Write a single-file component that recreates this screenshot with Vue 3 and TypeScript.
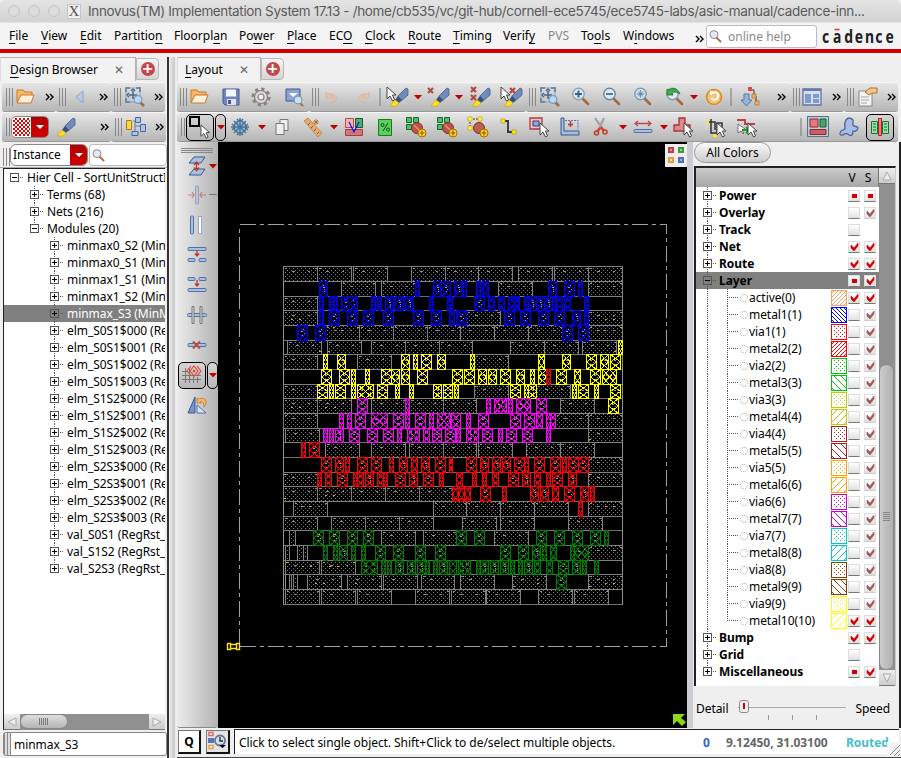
<script setup lang="ts">
type Placed = { icon: string; gap: number; size: number }

const menus: { text: string; key: number; left: number; off?: boolean }[] = [
  { text: 'File', key: 0, left: 9 },
  { text: 'View', key: 0, left: 41 },
  { text: 'Edit', key: 0, left: 80 },
  { text: 'Partition', key: 8, left: 114 },
  { text: 'Floorplan', key: 7, left: 174 },
  { text: 'Power', key: 2, left: 239 },
  { text: 'Place', key: 0, left: 287 },
  { text: 'ECO', key: 2, left: 329 },
  { text: 'Clock', key: 0, left: 365 },
  { text: 'Route', key: 0, left: 408 },
  { text: 'Timing', key: 0, left: 453 },
  { text: 'Verify', key: 5, left: 503 },
  { text: 'PVS', key: -1, left: 548, off: true },
  { text: 'Tools', key: 2, left: 581 },
  { text: 'Windows', key: 1, left: 623 },
]

const glass = (c: string) =>
  `<path d="M12.500 12.500l5.500 5.500" stroke="#a8683a" stroke-width="2.600" stroke-linecap="round"/><circle cx="8.500" cy="8" r="5.700" fill="#dfeaf4" stroke="${c}" stroke-width="1.400"/>`
const pen = `<path d="M12 10L20 2l2 1v6l-7 6z" fill="#6f8cc0" stroke="#4c5c78" stroke-width=".8"/><path d="M12 10l4 4-3 3-4-3z" fill="#39507c"/><path d="M9 14l4 3-3 3H4z" fill="#ffe020" stroke="#d8a800" stroke-width=".7"/>`
const cursor = `<path d="M1 1v12l3-3 2.500 5 2-1-2-5h3.500z" fill="#fff" stroke="#444" stroke-width="1"/>`
const xMark = (x: number, y: number) =>
  `<path d="M${x} ${y}l5 5m0-5l-5 5" stroke="#b04844" stroke-width="2.200"/>`
const greenAdd = `<path d="M1.500 1.500h5v5h-5zM8.500 1.500h5v5h-5zM1.500 8.500h5v5h-5z" fill="#4fc070" stroke="#106828"/><circle cx="12" cy="12" r="5.500" fill="#c05048" stroke="#803028"/><path d="M9 9l6 6" stroke="#d89088" stroke-width="1.500"/>`
const plusBadge = `<circle cx="17" cy="17" r="4" fill="#ffd820" stroke="#a07000"/><path d="M17 14.500v5M14.500 17h5" stroke="#a05010" stroke-width="1.200"/>`
const bar = (x: number, y: number, w: number, h: number) =>
  `<rect x="${x}" y="${y}" width="${w}" height="${h}" rx="1" fill="#a9c0e6" stroke="#5070a8"/>`
const fit = `<path d="M2 6V2h4M12 2h4v4M2 12v4h4M7 5l2-2 2 2M5 7L3 9l2 2M9 5v8M5 9h8" fill="none" stroke="#45688c" stroke-width="1.500"/><path d="M2 2h14v14H2z" fill="none" stroke="#7897b4" stroke-width=".8"/><path d="M16 16l4 4" stroke="#a8683a" stroke-width="2.500"/><circle cx="14" cy="13.500" r="4" fill="#b5d5f0" stroke="#6a96bb"/>`

const icons: Record<string, string> = {
  folder: `<path d="M3 16V4h6l2 2h7v4" fill="#f7b765" stroke="#c8782c"/><path d="M3 17L7 9h13l-3 8z" fill="#fdf0dc" stroke="#c8782c"/>`,
  save: `<path d="M3 3h16v16H5l-2-2z" fill="#6e86bd" stroke="#435b94"/><path d="M6 3.500h10v7H6z" fill="#f4f7fd"/><path d="M7 13h9v6H7z" fill="#dfe3ea"/><path d="M8 14h3v4H8z" fill="#435b94"/>`,
  gear: `<circle cx="11" cy="11" r="8" fill="none" stroke="#8c8080" stroke-width="3" stroke-dasharray="3.200 3.083"/><circle cx="11" cy="11" r="6.500" fill="#ddd8d8" stroke="#887c7c" stroke-width="1.200"/><circle cx="11" cy="11" r="3" fill="#eee" stroke="#887c7c" stroke-width="1.200"/>`,
  find: `<path d="M3 3h14v12H3z" fill="#8ca4cf" stroke="#3f588b"/><path d="M6 7l4 4 5-4z" fill="#fff"/><path d="M17 17l3 3" stroke="#b06b38" stroke-width="2"/><circle cx="15" cy="14" r="4" fill="#cde1f1" stroke="#6a96bb"/>`,
  undo: `<path d="M5 6v6h6l-2-2c5-1 5 3 1 7 8-2 7-10-3-9z" fill="#e8c4aa" stroke="#d8b098" stroke-width=".8"/>`,
  redo: `<path d="M17 6v6h-6l2-2c-5-1-5 3-1 7-8-2-7-10 3-9z" fill="#e8c4aa" stroke="#d8b098" stroke-width=".8"/>`,
  penCursor: cursor + pen,
  penX: xMark(1, 2) + pen,
  penXX: xMark(3, 1) + xMark(3, 9) + pen,
  penCX: cursor + pen + xMark(10, 2),
  pen,
  fit,
  zoomIn: glass('#8ba4b8') + '<path d="M8.500 4.500v7M5 8h7" stroke="#34628c" stroke-width="2"/>',
  zoomOut: glass('#6a8aa4') + '<path d="M5 8h7" stroke="#54789c" stroke-width="2"/>',
  zoomFit: glass('#7d9ab4') + '<path d="M8.500 4v8M4.500 8h8" stroke="#7fa0bc" stroke-width="1.500"/><path d="M6 5.500l5 5m0-5l-5 5" stroke="#5880a0"/>',
  zoomPrev: glass('#7d9ab4') + '<path d="M3 9V3l2 1c5-3 9-1 11 4-4-3-6-2-8-1l1 2z" fill="#3fae49" stroke="#18702a" stroke-width=".8"/>',
  refresh: `<circle cx="11" cy="11" r="7.500" fill="#f6c178" stroke="#e08a20" stroke-width="1.600"/><path d="M8 9V6l2 1c4-2 6 1 5 4-1 3-5 4-7 1" fill="none" stroke="#fff" stroke-width="2"/>`,
  hier: `<path d="M6 8h5v6h3l-5.500 6-5.500-6h3z" fill="#9ab5d6" stroke="#5276a5"/><path d="M12 4h4v4m2 2v6" fill="none" stroke="#333"/><path d="M10 1h4v4h-4z" fill="#e04848"/><path d="M14 8h4v4h-4zM17 15h4v4h-4z" fill="#efb060" stroke="#a87028" stroke-width=".7"/>`,
  window: `<path d="M2 3h18v16H2z" fill="#d7dfef" stroke="#5d739f" stroke-width="1.300"/><path d="M2 3h18v2H2z" fill="#607bb0"/><path d="M4 8h6v9H4zM12 8h6v4h-6zM12 13h6v4h-6z" fill="#7f9ad0"/>`,
  note: `<path d="M3 5h13v15H3z" fill="#f4f4f4" stroke="#8a8a8a"/><path d="M5 11h8M5 14h8M5 17h6" stroke="#a5a5a5"/><path d="M9 6l5-4h7v5h-5l-3 2z" fill="#f7c786" stroke="#a87030"/>`,
  flake: `<g fill="none" stroke="#47759c" stroke-width="1.500"><circle cx="11" cy="11" r="6" fill="#9abbd2"/><path d="M11 2v18M2 11h18M5 5l12 12M17 5L5 17M8 3l3 3 3-3M8 19l3-3 3 3M3 8l3 3-3 3M19 8l-3 3 3 3"/></g>`,
  copy: `<path d="M9 3.500h8v11H9z" fill="#eee" stroke="#777"/><path d="M5 7.500h8v11H5z" fill="#eee" stroke="#777"/>`,
  ruler: `<path d="M2 5l4-3 14 15-4 4z" fill="#e3ab74" stroke="#c88748"/><path d="M6 9l2-2m1 5l2-2m1 5l2-2m1 5l2-2" stroke="#8d5320"/><path d="M14 3v6M11 6h6M12 4l4 4m0-4l-4 4" stroke="#b85d18" stroke-width=".8"/>`,
  colors: `<path d="M2.500 2.500h8v9h-8z" fill="#f2b1b5" stroke="#b64b50"/><path d="M12.500 2.500h7v9h-7z" fill="#52aa71" stroke="#125f2c"/><path d="M2.500 13.500h17v6h-17z" fill="#d67578" stroke="#a93a40"/><path d="M6 6l5 10 5-10" fill="none" stroke="#1010ff" stroke-width="1.200"/>`,
  percent: `<path d="M4.500 3.500h13v16h-13z" fill="#5cd05c" stroke="#137b20"/><path d="M14 7l-5 8" stroke="#114e17"/><circle cx="8.500" cy="9" r="1.500" fill="none" stroke="#114e17"/><circle cx="14" cy="13.500" r="1.500" fill="none" stroke="#114e17"/>`,
  greenAdd: greenAdd + plusBadge,
  yellowAdd: `<path d="M3 3h11M3 3v10" stroke="#333" stroke-dasharray="2 1"/><circle cx="12" cy="12" r="5.500" fill="#b7614e" stroke="#803028"/><path d="M1 1h4v4H1zM11 1h4v4h-4zM1 10h4v4H1z" fill="#fff050" stroke="#c8a800" stroke-width=".7"/>` + plusBadge,
  wire: `<path d="M5 5h5v11h6" fill="none" stroke="#333" stroke-width="1.800"/><path d="M3 3h4v4H3zM14 14h4v4h-4z" fill="#ffe820" stroke="#b4a000" stroke-width=".7"/>`,
  rectCur: `<path d="M2 2h12v11H2z" fill="#efc2c2" stroke="#b23838" stroke-width="1.300"/><path d="M5 5h6v5H5z" fill="#93a8d8" stroke="#283e84"/><g transform="translate(11 6)">${cursor}</g>`,
  bracket: `<path d="M2 2h3v13h15v4H2z" fill="#a6bbdf" stroke="#3b588e"/><path d="M6 4.500h13v9" fill="none" stroke="#5677b1" stroke-dasharray="2 1"/><path d="M11.500 5v6M9 8.500h5" stroke="#b83838" stroke-width="1.500"/>`,
  cut: `<path d="M3 2l7 10M12 2L7 13" stroke="#9e9e9e" stroke-width="2"/><path d="M9 11l3 4M8 12l-3 4" stroke="#d9422c" stroke-width="2.500"/><circle cx="4.500" cy="17" r="2" fill="none" stroke="#c33a28" stroke-width="1.500"/><circle cx="13" cy="16" r="2" fill="none" stroke="#c33a28" stroke-width="1.500"/>`,
  spacing: `<path d="M3 7.500h16M6 5L3 7.500 6 10M16 5l3 2.500-3 2.500" fill="none" stroke="#bb4a4a" stroke-width="1.300"/>${bar(2, 13.5, 18, 3)}`,
  poly: `<path d="M7 2h6v7h5v6H2V9h5z" fill="#de898c" stroke="#af3036" stroke-width="1.300"/><g transform="translate(11 6)">${cursor}</g>`,
  wires: `<path d="M7 3v14h6V7h5v10M3 6h8v8" fill="none" stroke="#333" stroke-width="1.500"/><path d="M1 7l4-3v4zM9 18h4v3H9z" fill="#ffe820"/><g transform="translate(12 6)">${cursor}</g>`,
  path: `<path d="M2 4h8v4h10" fill="none" stroke="#c54045" stroke-width="2"/><path d="M3 8v9l3-2 2 3 1-1-2-3 3-1z" fill="#fff" stroke="#555" stroke-width=".8"/><path d="M7 14h6m-2-3l3 3-3 3" stroke="#1b9822" stroke-width="1.800" fill="none"/><g transform="translate(12 6)">${cursor}</g>`,
  boxes: `<path d="M.500.500h21v20H.500z" fill="#b2d1db" stroke="#527388"/><path d="M3 3h8v8H3z" fill="#e5777c" stroke="#99242b"/><path d="M13 3h6v8h-6z" fill="#49a766" stroke="#165d2e"/><path d="M3 13.500h16v5H3z" fill="#ca5e64" stroke="#99242b"/>`,
  blob: `<path d="M8 4q3-4 7 0c1 2-2 5 1 6q6 1 3 4-2 2-4 1 0 6-4 4-3-3-6 0-5 1-2-4 5-2 4-4-1-4 1-7z" fill="#a9bde0" stroke="#4a659e" stroke-width="1.300"/>`,
  green: `<path d="M2.500 5.500h6v12h-6zM13.500 5.500h6v12h-6z" fill="#9ce1a4" stroke="#15762b"/><path d="M4 8h3M4 11h3M4 14h3M15 8h3M15 11h3M15 14h3" stroke="#17692a"/><path d="M9.500 2.500h3v17h-3z" fill="#ee8686" stroke="#b11f25"/>`,
  select: `<path d="M2 2h9v9H2z" fill="none" stroke="#000" stroke-width="2"/><g transform="translate(12 9) scale(.95)">${cursor}</g>`,
  hierarchy: `<path d="M8 5h4M10 5v12M10 10h5" stroke="#697da0"/><path d="M1.500 4.500h5v9h-5z" fill="#ffd541" stroke="#a67c10"/><path d="M10.500 1.500h5v5h-5zM15.500 8.500h5v7h-5zM7 15.500h6v4H7z" fill="#b0c4ea" stroke="#4965a0"/>`,
  back: `<path d="M15 5v12l-7-6z" fill="#b8cee8" stroke="#829abd" stroke-width=".8"/>`,
  sheets: `<path d="M8 2h11l-4 6H3zM8 14h11l-4 6H3z" fill="#a9bee1" stroke="#3b588e"/><path d="M10.500 7v8M8 10l2.500-3 2.500 3M8 12.500l2.500 3 2.500-3" fill="none" stroke="#be342e" stroke-width="1.300"/>`,
  squeeze: `<g opacity=".5">${bar(9.5, 2, 3, 18)}<path d="M2 11h6m-2-3l2 3-2 3M20 11h-6m2-3l-2 3 2 3" fill="none" stroke="#be342e" stroke-width="1.200"/></g>`,
  columns: `${bar(4.5, 2, 3, 18)}<path d="M12.500 2.500h3v17h-3z" fill="#fff" stroke="#506c9f" stroke-dasharray="1 1"/>`,
  alignUp: `${bar(2, 3.5, 18, 3)}${bar(2, 14.5, 7, 3)}${bar(13, 14.5, 7, 3)}<path d="M11 7v5M9 9.500l2 2.500 2-2.500" fill="none" stroke="#be342e" stroke-width="1.300"/>`,
  alignDown: `${bar(2, 3.5, 7, 3)}${bar(13, 3.5, 7, 3)}${bar(2, 14.5, 18, 3)}<path d="M11 6v6M9 9.500l2 2.500 2-2.500" fill="none" stroke="#be342e" stroke-width="1.300"/>`,
  cross: `${bar(1.5, 9.5, 19, 3)}<path d="M6 2.500h2v17H6zM14 2.500h2v17h-2z" fill="#ddd" stroke="#777"/>`,
  cutBar: `${bar(2, 9.5, 18, 3)}<path d="M7 7.500l7 7m0-7l-7 7" stroke="#b84a43" stroke-width="2"/>`,
  grid: `<path d="M4.500 4v15M8.500 4v15M12.500 11v8M16.500 13v6M1 7.500h6M1 11.500h19M1 15.500h19" stroke="#777"/><path d="M10 2L6 7l4 5M16 2l4 5-4 5M13 2L9 7l4 5 4-5z" fill="none" stroke="#e14b40" stroke-width="1.200"/><circle cx="13" cy="7" r="1.500" fill="#e14b40"/>`,
  flip: `<path d="M9 3v16H2z" fill="#7793ca" stroke="#3b588e"/><path d="M11 11v8h9z" fill="#d8e4f9" stroke="#5270a9"/><path d="M11 9V4l2 1c7-3 9 4 5 8 0-5-2-6-4-5l1 1z" fill="#f8b765" stroke="#b97329" stroke-width=".8"/>`,
  tri: `<path d="M1 2h8L5 6.500z" fill="#c00000"/>`,
  sep: `<path d="M1 0v18" stroke="#777"/>`,
  more: `<path d="M1 2l3 3-3 3M5 2l3 3-3 3" fill="none" stroke="#000" stroke-width="1.400"/>`,
  grip: `<path d="M1.500 0v18M4.500 0v18M7.500 0v18" stroke="#888"/>`,
}

const dims: Record<string, [number, number]> = { tri: [10, 8], sep: [2, 18], more: [10, 10], grip: [8, 18] }
const dim = (n: string): [number, number] => dims[n] ?? [22, 22]

/* Turns icon centre positions into the gap before each icon. */
function place(start: number, items: [string, number][]): Placed[] {
  let at = start
  return items.map(([icon, c]) => {
    const size = dim(icon)[0]
    const gap = c - size / 2 - at
    at = c + size / 2
    return { icon, gap, size }
  })
}

const leftOne = [
  { w: 54, items: place(2, [['grip', 9], ['folder', 25], ['more', 50]]) },
  { w: 55, items: place(57, [['grip', 63], ['back', 80], ['more', 105]]) },
  { w: 54, items: place(112, [['grip', 118], ['fit', 136], ['more', 160]]) },
]
const rightOne = [
  { w: 132, items: place(177, [['grip', 183], ['folder', 199], ['save', 231], ['gear', 261], ['find', 294]]) },
  { w: 217, items: place(309, [['grip', 315], ['undo', 332], ['redo', 363], ['sep', 380], ['penCursor', 397], ['tri', 418], ['penX', 438], ['tri', 459], ['penXX', 479], ['penCX', 511]]) },
  { w: 264, items: place(526, [['grip', 532], ['fit', 550], ['zoomIn', 581], ['zoomOut', 612], ['zoomFit', 643], ['zoomPrev', 675], ['tri', 694], ['refresh', 714], ['sep', 731], ['hier', 749], ['more', 782]]) },
  { w: 54, items: place(790, [['grip', 796], ['window', 812], ['more', 837]]) },
  { w: 54, items: place(844, [['grip', 850], ['note', 867], ['more', 892]]) },
]
const rightTwo = place(228, [['flake', 240], ['tri', 262], ['copy', 282], ['ruler', 313], ['tri', 334], ['colors', 354], ['percent', 385], ['greenAdd', 416], ['greenAdd', 447], ['yellowAdd', 478], ['wire', 509], ['rectCur', 539], ['bracket', 570], ['cut', 603], ['tri', 623], ['spacing', 643], ['tri', 664], ['poly', 683], ['wires', 715], ['path', 746], ['sep', 801], ['boxes', 818], ['blob', 849]])
const side = ['sheets', 'squeeze', 'columns', 'alignUp', 'alignDown', 'cross', 'cutBar']

const modules = [
  'minmax0_S2 (Min', 'minmax0_S1 (Min', 'minmax1_S1 (Min', 'minmax1_S2 (Min', 'minmax_S3 (MinM',
  ...['S0S1', 'S1S2', 'S2S3'].flatMap((s) => [0, 1, 2, 3].map((n) => `elm_${s}$00${n} (Re`)),
  'val_S0S1 (RegRst_', 'val_S1S2 (RegRst_', 'val_S2S3 (RegRst_',
]
const tree = [
  { text: 'Hier Cell - SortUnitStructI', level: 0, open: true },
  { text: 'Terms (68)', level: 1, open: false },
  { text: 'Nets (216)', level: 1, open: false },
  { text: 'Modules (20)', level: 1, open: true },
  ...modules.map((text) => ({ text, level: 2, open: false })),
]

type Box = 'on' | 'dim' | 'off' | 'part' | 'none'
interface Layer { text: string; v: Box; s: Box; child?: boolean; color?: string; fill?: string }
const group = (text: string, v: Box, s: Box): Layer => ({ text, v, s })
const hues = ['#0000ff', '#ff0000', '#00c800', '#c8c800', '#a52020', '#ffa500', '#c800c8', '#00c8c8', '#8b4000', '#ffff00']
const layers: Layer[] = [
  group('Power', 'part', 'part'), group('Overlay', 'off', 'dim'), group('Track', 'off', 'none'),
  group('Net', 'on', 'on'), group('Route', 'on', 'on'), group('Layer', 'part', 'on'),
  { text: 'active(0)', v: 'on', s: 'on', child: true, color: '#f4a460', fill: 'up4' },
  ...hues.flatMap((_, i): Layer[] => {
    const n = i + 1
    const metal: Layer = { text: `metal${n}(${n})`, v: n === 10 ? 'on' : 'off', s: n === 10 ? 'on' : 'dim', child: true, color: hues[i], fill: (n % 2 ? 'down' : 'up') + (n < 3 ? 4 : 7) }
    const via: Layer = { text: `via${n}(${n})`, v: 'off', s: 'dim', child: true, color: hues[n], fill: 'dots' }
    return n < 10 ? [metal, via] : [metal]
  }),
  group('Bump', 'on', 'on'), group('Grid', 'off', 'none'), group('Miscellaneous', 'part', 'on'),
]
function swatch(fill: string): string {
  if (fill === 'dots') {
    let d = ''
    for (let y = 2; y < 14; y += 2) for (let x = y % 4 ? 3 : 5; x < 14; x += 4) d += `M${x} ${y + 0.5}h1`
    return d
  }
  const step = Number(fill.slice(-1))
  let d = ''
  for (let k = step; k < 31; k += step) {
    const a = Math.max(1, k - 15), b = Math.min(15, k)
    d += fill.startsWith('up') ? `M${a} ${k - a}L${b} ${k - b}` : `M${16 - a} ${k - a}L${16 - b} ${k - b}`
  }
  return d
}

/* Standard-cell rows: filler cells, then placed cells by colour; units are thirds of a pixel. */
const rowTops = [266, 281, 296, 310, 325, 340, 354, 369, 384, 398, 413, 428, 442, 457, 472, 486, 501, 516, 530, 545, 560, 574, 589, 604]
const rows: string[] = [
  'g 25-127 127-229 235-337 409-511 511-610 610-712 730-832 838-940 940-1042',
  'g 199-301 319-421 670-772 940-1042 b 132-158 421-434 475-499 499-525 537-562 562-575 604-617 622-641 820-845 868-899 910-923',
  'g 25-127 b 132-146 163-175 175-188 199-247 289-302 307-320 331-356 361-386 391-415 463-476 517-532 598-629 640-659 670-689 700-719 719-732 748-761 761-785 785-809 809-833 833-845 845-863 868-887 928-941',
  'g 25-127 575-677 940-1042 b 132-146 163-194 217-248 265-296 325-356 415-446 469-500 523-537 543-575 688-719 736-767 790-821 838-868 892-916 928-941',
  'g 152-254 254-355 355-457 457-556 556-658 658-760 760-862 940-1042 b 67-98 121-152 862-893 910-941',
  'g 37-139 157-259 289-391 391-493 493-592 706-808 808-910 922-1024 y 1030-1042',
  'g 25-127 247-349 599-701 y 145-158 187-211 379-404 415-428 439-470 487-511 586-599 790-809 862-886 934-965 976-1001 1006-1037',
  'y 139-170 193-224 229-242 271-284 319-349 349-374 379-404 427-458 532-563 568-599 610-635 640-665 676-707 724-749 766-779 790-814 844-875 898-917 946-977 982-1025 r 814-827',
  'g 25-127 598-700 785-886 y 127-158 163-176 181-212 229-242 247-296 307-338 361-374 403-416 475-500 505-531 538-551 706-737 748-761 761-785 892-905 910-941 958-971 1006-1037',
  'g 25-127 127-229 289-391 403-505 505-604 856-958 m 247-278 391-404 634-647 658-695 700-713 724-767 784-815 y 1000-1031',
  'g 25-127 841-940 940-1042 m 193-206 217-230 241-272 289-338 355-386 391-404 421-452 463-476 487-525 529-557 574-587 610-641 706-737 748-779 784-803 814-827 827-840',
  'g 31-133 940-1042 m 145-158 163-176 182-206 223-254 277-308 325-356 367-380 397-434 445-462 473-500 511-541 545-557 573-611 622-653 670-683 694-725 742-773 814-827',
  'g 151-253 289-391 403-505 505-604 610-712 754-856 856-958 r 79-92 103-134',
  'g 940-1042 r 139-170 181-206 211-224 247-278 289-320 343-356 373-398 409-428 439-464 481-512 523-533 574-605 616-641 652-677 682-707 718-748 748-761 778-809 826-857 862-875 880-911 911-940',
  'g 25-127 940-1042 r 127-140 151-170 187-218 235-248 248-266 271-296 307-326 326-338 361-392 403-428 445-476 493-506 544-563 592-605 622-635 652-671 700-731 742-767 778-797 814-827 832-863 880-905',
  'g 25-127 127-229 229-331 331-433 433-532 r 532-551 551-569 569-587 616-647 682-695 766-791 796-821 832-851 868-899 916-941 946-959',
  'g 55-157 475-574 574-676 676-778 778-880 940-1042 r 910-923',
  'g 25-127 169-271 271-373 373-475 562-664 676-778 880-982',
  'g 43-61 319-421 445-544 658-760 n 115-146 163-194 217-248 265-296 544-575 598-629 784-815 838-869 892-923 946-977 988-1001',
  'g 31-43 67-85 85-97 941-1042 n 145-158 175-188 193-218 229-242 259-272 301-332 355-386 421-452 481-512 676-707 730-761 772-797 802-815 826-845 886-899 899-941',
  'g 31-133 139-241 n 259-307 319-332 337-350 361-386 397-422 427-452 452-464 475-488 493-518 523-545 550-587 604-615 616-641 646-671 676-701 706-719 730-743 748-773 778-797 814-833 850-881 892-917 922-935 958-971',
  'g 43-49 55-67 97-199 217-319 325-427 439-538 556-658 712-814 940-1042 n 844-875',
  'g 31-133 139-241 247-349 421-523 529-631 634-736 790-892 898-1000',
]
const cellColor: Record<string, string> = { g: '#808080', b: '#0000ff', y: '#ffff00', m: '#ff00ff', r: '#ff0000', n: '#008000' }
const cells = rows.flatMap((row, i) => {
  let kind = 'g'
  const out: { kind: string; x: number; y: number; w: number; h: number }[] = []
  for (const part of row.split(' ')) {
    if (part.length === 1) { kind = part; continue }
    const [a, b] = part.split('-').map((v) => Math.floor(Number(v) / 3) + 275.5)
    out.push({ kind, x: a, y: rowTops[i] + 0.5, w: b - a, h: rowTops[i + 1] - rowTops[i] })
  }
  return out
}).sort((a, b) => Number(a.kind !== 'g') - Number(b.kind !== 'g'))

/* Crossed strokes drawn inside a placed cell. */
function crosses(x: number, y: number, w: number, h: number): string {
  const n = Math.max(1, Math.round(w / 7)), s = w / n, q = h / 2
  let d = ''
  for (let i = 0; i < n; i++) {
    for (let j = 0; j < 2; j++) {
      const l = x + i * s, t = y + j * q
      d += `M${l} ${t}L${l + s} ${t + q}M${l + s} ${t}L${l} ${t + q}`
    }
  }
  return d
}
const pins = cells.filter((c) => c.kind !== 'g' && c.w > 7).map((c) => `M${c.x + 3} ${c.y + 6}h2M${c.x + c.w - 4} ${c.y + 8}h1M${c.x + 4} ${c.y + 10}h1M${c.x + c.w - 5} ${c.y + 4}h1`).join('')
const goldPins = [[291, 319], [299, 319], [333, 327], [341, 330], [357, 327], [367, 330], [319, 351], [328, 351], [291, 407], [299, 407], [325, 407], [334, 407], [301, 506], [309, 506], [325, 495], [333, 495], [284, 474], [284, 498], [605, 319], [613, 319], [597, 330], [604, 330], [620, 327], [614, 351], [589, 474], [605, 506], [613, 506], [589, 439], [542, 506], [551, 506], [286, 562], [302, 566], [310, 566], [329, 566], [337, 566], [353, 562], [315, 583], [323, 583], [339, 586], [355, 583], [379, 586], [513, 586], [537, 583], [589, 586], [605, 583], [613, 583], [318, 534], [333, 534], [367, 534]]
</script>

<template>
  <div class="app">
    <header class="title">
      <i class="dot" /><i class="dot" /><i class="dot" />
      <span class="xlogo">X</span>
      <span class="caption">Innovus(TM) Implementation System 17.13 - /home/cb535/vc/git-hub/cornell-ece5745/ece5745-labs/asic-manual/cadence-inn...</span>
    </header>
    <nav class="menu">
      <div class="menus">
        <span v-for="(m, i) in menus" :key="m.text" class="item" :class="{ off: m.off }" :style="{ width: (menus[i + 1]?.left ?? 695) - m.left + 'px' }">{{ m.key < 0 ? m.text : m.text.slice(0, m.key) }}<u v-if="m.key >= 0">{{ m.text[m.key] }}</u>{{ m.key < 0 ? '' : m.text.slice(m.key + 1) }}</span>
      </div>
      <svg class="chev" width="10" height="10" v-html="icons.more" />
      <div class="help"><svg width="14" height="14" viewBox="0 0 20 20" v-html="glass('#9d7a80')" /><span>online help</span></div>
      <svg class="logo" width="76" height="24">
        <text transform="scale(.82 1)" y="19" x="0 13.500 27 40 52.500 65 77.500">cadence</text>
        <path d="M12.500 5.500h5" stroke="#e03030" stroke-width="1.500" />
      </svg>
    </nav>
    <div class="redline" />

    <main class="work">
      <section class="left">
        <div class="tabs"><div class="tab wide"><span><u>D</u>esign Browser</span><b>✕</b></div><div class="add"><i>+</i></div></div>
        <div class="bar">
          <div v-for="(g, i) in leftOne" :key="i" class="group" :style="{ width: g.w + 'px' }">
            <svg v-for="(p, k) in g.items" :key="k" :width="p.size" :height="dim(p.icon)[1]" :style="{ marginLeft: p.gap + 'px' }" v-html="icons[p.icon]" />
          </div>
        </div>
        <div class="bar">
          <div class="group two">
            <svg width="8" height="18" v-html="icons.grip" />
            <div class="picker"><i class="check" /><i class="drop"><svg width="10" height="8"><path d="M1 2h8L5 6z" fill="#fff" /></svg></i></div>
            <svg class="brush" width="22" height="22" v-html="icons.pen" />
            <svg class="over" width="10" height="10" v-html="icons.more" />
          </div>
          <div class="group three">
            <svg width="8" height="18" v-html="icons.grip" />
            <svg width="22" height="22" v-html="icons.hierarchy" />
            <svg class="over" width="10" height="10" v-html="icons.more" />
          </div>
        </div>
        <div class="filter">
          <svg width="8" height="14" viewBox="0 0 8 14" v-html="icons.grip" />
          <div class="combo"><span>Instance</span><i class="drop"><svg width="10" height="8"><path d="M1 2h8L5 6z" fill="#fff" /></svg></i></div>
          <div class="search"><svg width="14" height="14" viewBox="0 0 20 20" v-html="glass('#9d7a80')" /></div>
        </div>
        <div class="treebox">
          <div class="rows">
            <div v-for="(t, i) in tree" :key="i" class="trow" :class="['lv' + t.level, { sel: i === 8 }]">
              <span class="node" :class="{ first: i === 0, last: i === 3 || i === tree.length - 1 }"><i class="pm" :class="{ open: t.open }" /></span>
              <i class="stub" /><span class="lbl">{{ t.text }}</span>
            </div>
          </div>
          <div class="hscroll">
            <i class="sb"><svg width="10" height="10"><path d="M9 1v8L1 5z" fill="#eee" stroke="#aaa" /></svg></i>
            <i class="thumb"><svg width="10" height="7"><path d="M.500 0v7M2.500 0v7M4.500 0v7M6.500 0v7M8.500 0v7" stroke="#777" /></svg></i>
            <i class="sb r"><svg width="10" height="10"><path d="M1 1v8l8-4z" fill="#eee" stroke="#aaa" /></svg></i>
          </div>
        </div>
        <div class="entry"><i class="egrip" /><span>minmax_S3</span></div>
      </section>

      <i class="split" />

      <section class="right">
        <div class="tabs"><div class="tab"><span><u>L</u>ayout</span><b>✕</b></div><div class="add"><i>+</i></div></div>
        <div class="bar">
          <div v-for="(g, i) in rightOne" :key="i" class="group" :style="{ width: g.w + 'px' }">
            <svg v-for="(p, k) in g.items" :key="k" :width="p.size" :height="dim(p.icon)[1]" :style="{ marginLeft: p.gap + 'px' }" v-html="icons[p.icon]" />
          </div>
        </div>
        <div class="bar">
          <div class="group full">
            <svg class="g" width="8" height="18" v-html="icons.grip" />
            <div class="pressed"><svg width="24" height="24" v-html="icons.select" /></div>
            <div class="pressed slim"><svg width="10" height="8" v-html="icons.tri" /></div>
            <svg v-for="(p, k) in rightTwo" :key="k" :width="p.size" :height="dim(p.icon)[1]" :style="{ marginLeft: p.gap + 'px' }" v-html="icons[p.icon]" />
            <div class="pressed tail"><svg width="22" height="22" v-html="icons.green" /></div>
          </div>
        </div>

        <div class="stage">
          <aside class="side">
            <i class="hgrip" />
            <div v-for="(s, i) in side" :key="s" class="tool" :class="'t' + i">
              <svg width="22" height="22" v-html="icons[s]" />
              <svg v-if="i === 0" width="10" height="8" v-html="icons.tri" />
              <i v-if="i === 1" class="dash" />
            </div>
            <div class="gridtool"><div class="pressed"><svg width="22" height="22" v-html="icons.grid" /></div><div class="pressed slim"><svg width="10" height="8" v-html="icons.tri" /></div></div>
            <div class="tool"><svg width="22" height="22" v-html="icons.flip" /></div>
          </aside>

          <div class="canvas">
            <svg width="469" height="586" viewBox="218 142 469 586">
              <defs>
                <pattern id="filler" width="4" height="4" patternUnits="userSpaceOnUse"><path d="M1 .500h1M3 2.500h1" stroke="#808080" shape-rendering="crispEdges" /></pattern>
              </defs>
              <g fill="none" shape-rendering="crispEdges">
                <path d="M239.500 646.500H666.500V224.500H239.500Z" stroke="#a0a0a0" stroke-dasharray="16 4 4 4" />
                <path v-for="y in rowTops" :key="y" :d="`M283 ${y + 0.5}H623`" stroke="#707070" />
                <path d="M283.500 266V605M622.500 266V605M285.500 545V605M289.500 575v14" stroke="#909090" />
                <template v-for="(c, i) in cells" :key="i">
                  <rect :x="c.x" :y="c.y" :width="c.w" :height="c.h" :fill="c.kind === 'g' ? 'url(#filler)' : '#000'" :stroke="cellColor[c.kind]" />
                  <path v-if="c.kind !== 'g'" :d="crosses(c.x, c.y, c.w, c.h)" :stroke="cellColor[c.kind]" />
                  <path v-else-if="c.w > 20" :d="`M${c.x + 1} ${c.y + 1.5}h2M${c.x + c.w - 1} ${c.y + 1.5}h-2M${c.x + 8} ${c.y + 5}h3M${c.x + 24} ${c.y + 5}h2`" stroke="#909090" />
                </template>
                <path :d="pins" stroke="#999" />
                <path v-for="(p, i) in goldPins" :key="'p' + i" :d="`M${p[0]} ${p[1] + 0.5}h2`" stroke="#e0b020" />
              </g>
              <path d="M227.500 643.500h3v6h-3zM236.500 643.500h3v6h-3zM230 644.500h7M230 648.500h7" fill="none" stroke="#ffe020" stroke-width="1.400" />
              <path d="M673 714h12l-4 4 5 4-4 4-5-5-4 4z" fill="#8fd818" />
            </svg>
            <div class="palette"><i /><i /><i /><i /></div>
          </div>
          <i class="split2" />

          <aside class="panel">
            <button class="all">All Colors</button>
            <div class="lbox">
              <div class="lmain">
                <div class="lhead"><span>V</span><span>S</span></div>
                <div v-for="l in layers" :key="l.text" class="lrow" :class="{ child: l.child, hl: l.text === 'Layer', tip: l.text === 'metal10(10)', final: l.text === 'Miscellaneous' }">
                  <span class="trunk"><i v-if="!l.child" class="pm" :class="{ open: l.text === 'Layer' }" /></span>
                  <template v-if="l.child"><i class="branch" /><i class="ring" /></template>
                  <i v-else class="stub" />
                  <span class="name">{{ l.text }}</span>
                  <svg v-if="l.fill" class="sw" width="16" height="16" shape-rendering="crispEdges"><path d="M.500.500h15v15H.500z" fill="#fff" :stroke="l.color" /><path :d="swatch(l.fill)" :stroke="l.color" fill="none" /></svg>
                  <span v-for="(b, k) in [l.v, l.s]" :key="k" class="cb" :class="b"><svg v-if="b === 'on' || b === 'dim'" width="11" height="11"><path d="M2 4l3 3 4-5v3L5 10 2 7z" :fill="b === 'on' ? '#d00000' : '#a05858'" :stroke="b === 'on' ? '#d00000' : '#a05858'" stroke-width=".6" /></svg><i v-if="b === 'part'" /></span>
                </div>
              </div>
              <div class="vscroll">
                <i class="sb"><svg width="10" height="10"><path d="M1 9h8L5 1z" fill="#eee" stroke="#aaa" /></svg></i>
                <i class="vthumb"><svg width="7" height="10"><path d="M0 .500h7M0 2.500h7M0 4.500h7M0 6.500h7M0 8.500h7" stroke="#888" /></svg></i>
                <i class="sb"><svg width="10" height="10"><path d="M1 1h8L5 9z" fill="#eee" stroke="#aaa" /></svg></i>
              </div>
            </div>
            <div class="detail">
              <span>Detail</span>
              <svg width="110" height="26"><path d="M1 9.500h108" stroke="#aaa" /><path d="M31.500 17v5M55.500 17v5M79.500 17v5" stroke="#999" /><rect x="2.500" y="2.500" width="9" height="12" rx="2" fill="#eee" stroke="#888" /><path d="M7 5v6" stroke="#d00000" stroke-width="2" /></svg>
              <span>Speed</span>
            </div>
          </aside>
        </div>

        <footer class="status">
          <div class="sbtn">Q</div>
          <div class="sbtn clock"><svg width="22" height="20"><path d="M2 1.500h4v3H2z" fill="#fff" stroke="#d66" stroke-width="1.500" /><path d="M1 7h6v5H1z" fill="#5878b0" /><path d="M2 14.500h4v3H2z" fill="#fff" stroke="#e8a050" stroke-width="1.500" /><circle cx="13" cy="9.500" r="5" fill="#d4dff0" stroke="#687890" stroke-width="1.800" /><path d="M13 6v4h3" fill="none" stroke="#222" stroke-width="1.300" /><path d="M12 14h7l-3.500 3z" /></svg></div>
          <div class="msg"><span>Click to select single object. Shift+Click to de/select multiple objects.</span><b class="n">0</b><b class="xy">9.12450, 31.03100</b><b class="st">Routed</b></div>
          <svg class="size" width="14" height="15"><path d="M3 13L13 3M7 14l6-6M11 14l2-2" stroke="#888" /></svg>
        </footer>
      </section>
    </main>
  </div>
</template>

<style>
body { margin: 0; overflow: hidden; background: #efefef; }
</style>

<style scoped>
* { box-sizing: border-box; }
.app { width: 901px; height: 758px; display: flex; flex-direction: column; background: #efefef; font: 12px/17px 'Noto Sans', 'Open Sans', sans-serif; letter-spacing: -.06px; color: #000; overflow: hidden; }
i { font-style: normal; }
svg { flex: none; display: block; overflow: visible; }
u { text-underline-offset: 3px; text-decoration-thickness: 1px; }
.title { height: 23px; flex: none; display: flex; align-items: center; background: linear-gradient(#e4e4e4, #d3d3d3); border-radius: 5px 5px 0 0; padding-left: 8px; border-bottom: 1px solid #e4e4e4; }
.dot { width: 12px; height: 12px; flex: none; border-radius: 50%; border: 1px solid #c6c6c6; background: #dcdcdc; margin-right: 8px; }
.xlogo { width: 14px; height: 15px; flex: none; background: #efefef; border: 1px solid #c4c4c4; font: 15px/13px 'Liberation Serif', serif; text-align: center; color: #555; margin: 0 7px 0 -1px; }
.caption { font: 13.500px/20px Inter, Roboto, sans-serif; letter-spacing: -.36px; color: #595959; white-space: nowrap; }
.menu { height: 26px; flex: none; display: flex; align-items: center; background: #f4f4f4; padding-left: 9px; letter-spacing: 0; }
.menus { display: flex; width: 686px; padding-bottom: 2px; }
.item { white-space: nowrap; flex: none; }
.off { color: #8a8a8a; }
.chev { margin-top: 5px; }
.help { width: 111px; height: 23px; margin-left: 1px; display: flex; align-items: center; gap: 6px; background: #fff; border: 1px solid #bdbdbd; border-radius: 3px; padding-left: 1px; color: #8a8a8a; }
.logo { margin-left: 5px; }
.logo text { font: bold 17px 'Noto Sans', sans-serif; fill: #222; }
.redline { height: 4px; flex: none; background: #d00000; }
.work { flex: 1; min-height: 0; display: flex; padding-top: 4px; }
.left { width: 169px; flex: none; display: flex; flex-direction: column; background: #efefef; border-right: 2px solid #333; }
.split { width: 6px; flex: none; background: linear-gradient(90deg, #eee, #c8c8cc); }
.right { flex: 1; min-width: 0; display: flex; flex-direction: column; padding-left: 2px; }
.tabs { height: 23px; flex: none; display: flex; margin-bottom: 2px; }
.tab { display: flex; align-items: center; width: 84px; height: 24px; border: 1px solid #b4b4b4; border-bottom: 0; border-left-color: #ddd; padding: 0 11px 0 7px; justify-content: space-between; background: #f2f2f2; }
.tab.wide { width: 136px; padding: 0 11px 0 9px; }
.tab b { font: bold 12px 'DejaVu Sans', sans-serif; color: #666; }
.add { width: 23px; height: 22px; margin-top: 1px; border: 1px solid #b8b8b8; border-radius: 0 4px 4px 0; display: flex; align-items: center; justify-content: center; background: linear-gradient(#f5f5f5, #d5d5d5); }
.add i { width: 14px; height: 14px; border-radius: 50%; background: #c2484c; color: #fff; font: bold 14px/13px 'DejaVu Sans', sans-serif; text-align: center; }
.bar { display: flex; height: 30px; flex: none; }
.left > .bar, .filter { padding-left: 2px; }
.group { height: 30px; flex: none; display: flex; align-items: center; background: linear-gradient(#e6e6e6, #b6b6b6); border-top: 1px solid #f6f6f6; border-bottom: 1px solid #999; border-radius: 3px; }
.group > svg { flex: none; }
.two { width: 109px; padding-left: 3px; }
.three { width: 55px; padding-left: 3px; gap: 3px; }
.brush { margin-left: -4px; }
.over { margin: 0 1px 0 auto; }
.picker { width: 38px; height: 22px; border: 1px solid #888; border-radius: 5px; display: flex; overflow: hidden; margin: 0 8px 0 -2px; background: #fff; flex: none; }
.check { width: 17px; margin: 1px; background: conic-gradient(#e60000 25%, #fff 0 50%, #e60000 0 75%, #fff 0) 0 0 / 4px 4px; }
.drop { width: 17px; background: linear-gradient(#b00000, #d00000); display: flex; align-items: center; justify-content: center; margin-left: auto; }
.filter { height: 26px; flex: none; display: flex; align-items: center; border-bottom: 1px solid #aaa; }
.combo { height: 22px; width: 78px; border: 1px solid #888; border-radius: 6px; background: #fff; display: flex; align-items: center; overflow: hidden; padding-left: 2px; }
.combo .drop { align-self: stretch; }
.search { flex: 1; height: 22px; background: #fff; border: 1px solid #bbb; border-radius: 4px; padding: 3px 1px; margin-left: 1px; }
.treebox { flex: 1; min-height: 0; margin-left: 3px; margin-right: 1px; border: 1px solid #222; border-width: 1px 0 0 1px; background: #fff; display: flex; flex-direction: column; width: 162px; }
.rows { flex: 1; overflow: hidden; }
.trow { height: 17px; display: flex; align-items: center; white-space: nowrap; overflow: hidden; }
.lv0 { padding-left: 5px; } .lv1 { padding-left: 25px; } .lv2 { padding-left: 45px; }
.sel { background: #808080; color: #fff; }
.node, .trunk { width: 11px; height: 17px; flex: none; display: flex; align-items: center; justify-content: center; background: linear-gradient(#555 50%, transparent 0) 5px 0 / 1px 2px repeat-y; }
.node.first { background: none; }
.node.last, .final .trunk { background-clip: content-box; padding-bottom: 8px; align-items: flex-start; }
.node.last .pm, .final .pm { margin-top: 4px; flex: none; }
.pm { width: 9px; height: 9px; border: 1px solid #555; background: linear-gradient(#000, #000) center / 5px 1px no-repeat, linear-gradient(#000, #000) center / 1px 5px no-repeat, #fff; }
.pm.open { background: linear-gradient(#000, #000) center / 5px 1px no-repeat, #fff; }
.sel .pm, .hl .pm { background-color: #808080; }
.stub { width: 4px; height: 1px; background: linear-gradient(90deg, #555 50%, transparent 0) 0 0 / 2px 1px; margin-right: 3px; flex: none; }
.hscroll { height: 16px; flex: none; background: #909090; display: flex; }
.sb { width: 16px; height: 16px; flex: none; display: flex; align-items: center; justify-content: center; background: linear-gradient(#eee, #ccc); border-bottom: 1px solid #777; }
.sb.r { margin-left: auto; }
.thumb { width: 48px; height: 15px; border-radius: 8px; border: 1px solid #888; background: linear-gradient(#ddd, #b5b5b5); display: flex; align-items: center; justify-content: center; }
.entry { height: 24px; flex: none; margin: 2px 0 2px 3px; display: flex; align-items: center; background: #fff; border: 1px solid #888; border-radius: 3px; }
.egrip { width: 7px; align-self: stretch; background: repeating-linear-gradient(90deg, #888 0 1px, #ddd 1px 3px); margin-right: 3px; }
.pressed { width: 28px; height: 27px; flex: none; border: 1px solid #000; border-radius: 5px; background: linear-gradient(#d5d5d5, #b7b7b7); display: flex; align-items: center; justify-content: center; }
.slim { width: 11px; margin-left: 1px; margin-right: 2px; }
.full { width: 721px; }
.full .g { margin: 0 -2px 0 3px; }
.tail { margin-left: 6px; }
.stage { flex: 1; min-height: 0; display: flex; }
.side { width: 41px; flex: none; background: linear-gradient(90deg, #ececec, #b2b2b2); border-radius: 0 0 3px 3px; border-bottom: 1px solid #888; display: flex; flex-direction: column; padding-top: 6px; }
.hgrip { width: 32px; height: 5px; margin-left: 4px; background: repeating-linear-gradient(#888 0 1px, transparent 1px 2px); flex: none; }
.tool { height: 30px; flex: none; display: flex; align-items: center; padding-left: 9px; }
.t0 { height: 25px; margin-bottom: 1px; }
.t1 { height: 31px; }
.dash { width: 8px; height: 1px; background: #777; margin-left: 1px; }
.gridtool { display: flex; height: 30px; flex: none; align-items: center; padding-left: 1px; }
.gridtool .slim { margin-right: 0; }
.canvas { width: 469px; flex: none; position: relative; background: #000; }
.palette { position: absolute; right: 0; top: 2px; width: 22px; height: 23px; background: #eee; padding: 3px; display: grid; grid-template-columns: 6px 6px; grid-auto-rows: 6px; gap: 4px; }
.palette i { border: 2px solid #c04048; background: #d99; }
.palette i:nth-child(2) { border-color: #3a9a3a; background: #9d9; }
.palette i:nth-child(3) { border-color: #e0a040; background: #fff0b0; }
.palette i:nth-child(4) { border-color: #5070b0; background: #9ae; }
.split2 { width: 6px; flex: none; background: #cdcdd1; }
.panel { flex: 1; min-width: 0; display: flex; flex-direction: column; border-right: 2px solid #222; }
.all { width: 77px; height: 21px; flex: none; margin: 0 0 3px 1px; padding: 0; border: 1px solid #999; border-radius: 11px; background: linear-gradient(#fafafa, #ccc); font: 12px/18px 'Noto Sans', sans-serif; letter-spacing: -.06px; color: #000; }
.lbox { height: 520px; flex: none; margin-left: 1px; width: 202px; display: flex; border: 2px solid #222; border-width: 2px 0 0 2px; background: #fff; border-right: 1px solid #ccc; }
.lmain { width: 183px; flex: none; }
.lhead { height: 19px; display: flex; justify-content: flex-end; gap: 8px; padding: 1px 6px 0 0; background: linear-gradient(#ccc, #a6a6a6); border-right: 1px solid #777; }
.lhead span { width: 8px; text-align: center; }
.lrow { height: 17px; display: flex; align-items: center; font-weight: bold; padding-left: 6px; }
.lrow .stub { margin-right: 2px; }
.lrow.child { font-weight: normal; }
.hl { background: #808080; }
.branch { align-self: stretch; width: 11px; margin-left: 14px; background: linear-gradient(#555 50%, transparent 0) 0 0 / 1px 2px repeat-y, linear-gradient(90deg, #555 50%, transparent 0) 0 8px / 2px 1px repeat-x; }
.tip .branch { height: 9px; align-self: flex-start; }
.ring { width: 8px; height: 8px; border: 1px dotted #aaa; border-radius: 50%; margin: 0 1px 0 2px; flex: none; }
.name { flex: 1; }
.sw { margin-right: 1px; }
.cb { width: 12px; height: 12px; flex: none; margin-right: 4px; background: linear-gradient(#fff, #e0e0e0); border: 1px solid #ddd; border-bottom-color: #777; display: flex; align-items: center; justify-content: center; }
.cb:last-child { margin-right: 3px; }
.cb.none { visibility: hidden; }
.cb.dim { border-bottom-color: #ccc; }
.cb i { width: 5px; height: 4px; background: #d00000; }
.vscroll { width: 16px; background: #909090; display: flex; flex-direction: column; }
.vthumb { margin-top: auto; height: 306px; flex: none; width: 15px; border-radius: 7px; background: linear-gradient(90deg, #ccc, #b0b0b0); border: 1px solid #888; display: flex; align-items: center; justify-content: center; }
.detail { display: flex; padding: 12px 9px 0 3px; justify-content: space-between; }
.detail span { padding-top: 2px; }
.status { height: 30px; flex: none; display: flex; align-items: center; padding: 0 2px 2px 1px; position: relative; border-bottom: 1px solid #444; }
.sbtn { width: 23px; height: 24px; flex: none; background: #fff; border: 1px solid #777; border-right: 2px solid #111; border-bottom: 2px solid #111; font: bold 12px/21px 'Noto Sans', sans-serif; text-align: center; margin-right: 5px; }
.clock { width: 24px; background: #e4e4e4; margin-right: 4px; }
.msg { flex: 1; height: 25px; background: #fff; border: 1px solid #222; border-width: 1px 0 0 1px; display: flex; align-items: center; white-space: nowrap; padding-left: 4px; }
.msg span { width: 464px; flex: none; }
.n { color: #3060e0; width: 23px; flex: none; }
.xy { color: #666; width: 120px; flex: none; }
.st { color: #48c0c8; }
.size { position: absolute; right: 0; bottom: 0; background: #f4f4f4; }
</style>
